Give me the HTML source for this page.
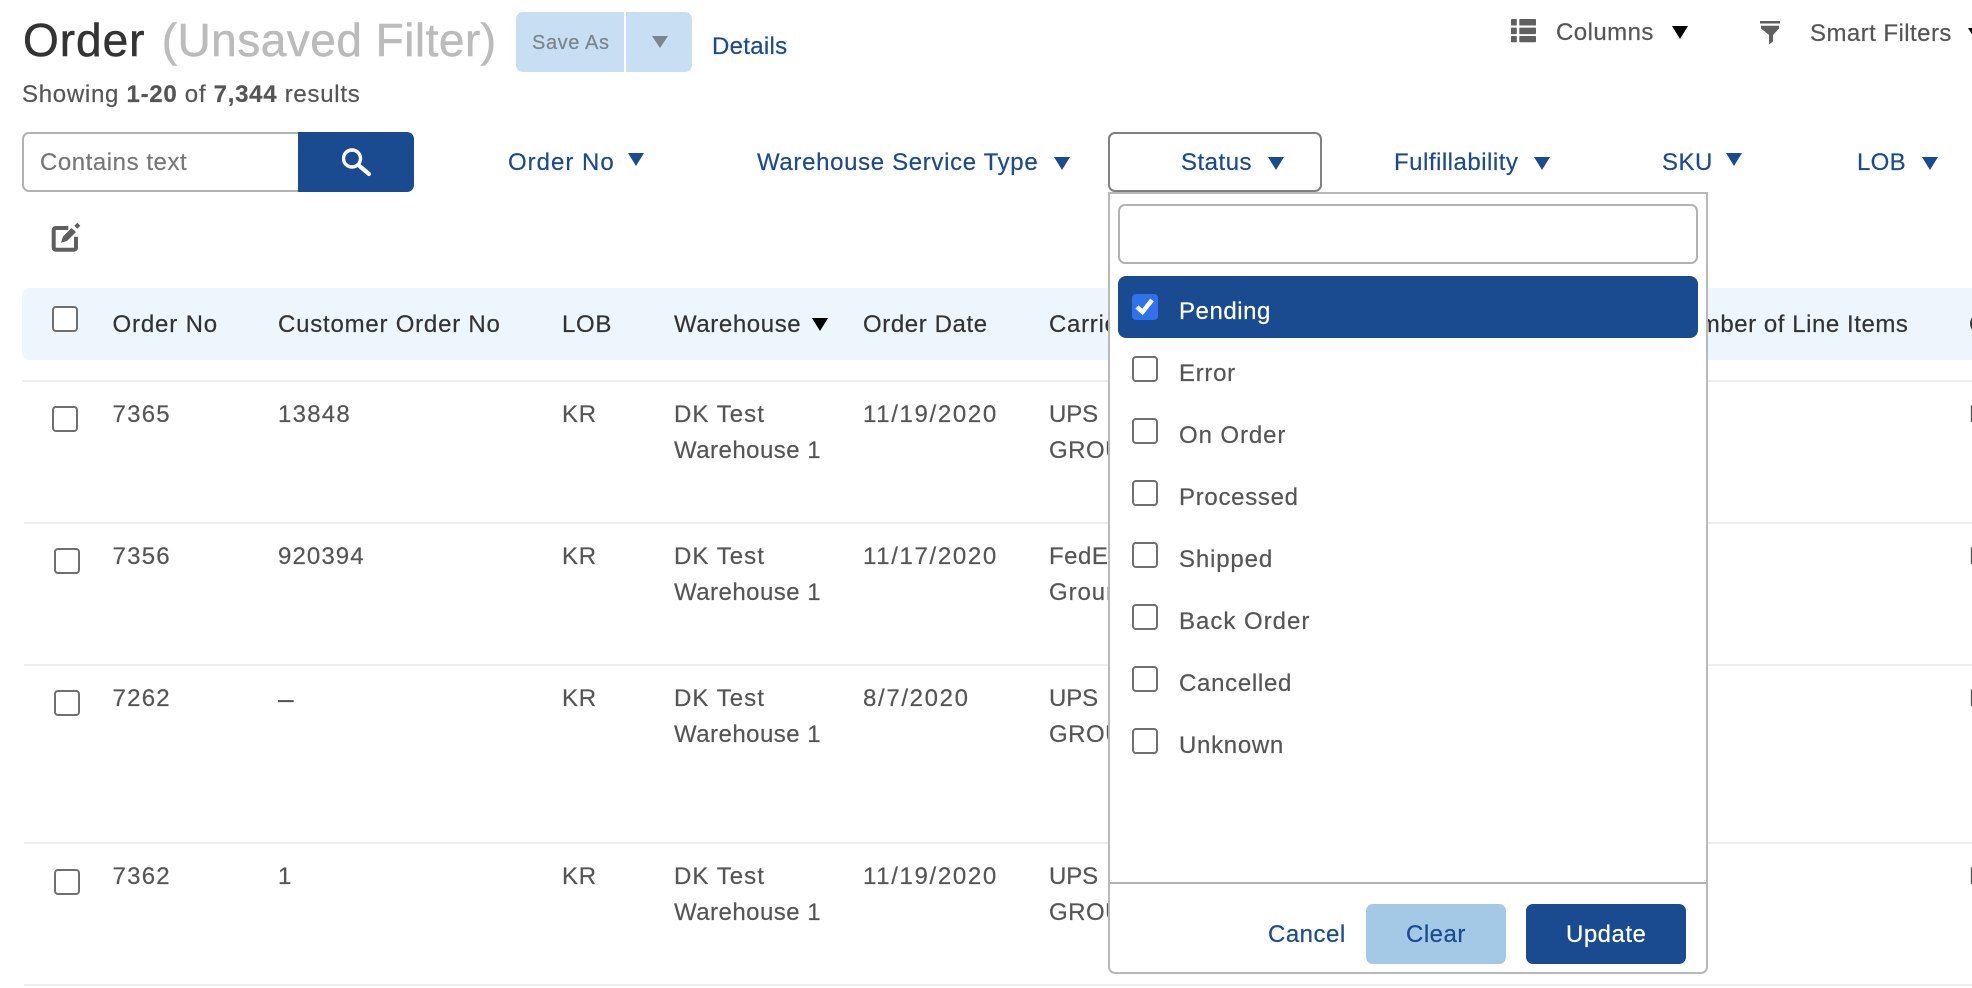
<!DOCTYPE html>
<html lang="en"><head><meta charset="utf-8"><title>Order</title>
<style>
html,body{margin:0;padding:0;background:#fff;width:1972px;height:988px;overflow:hidden}
body{position:relative;font-family:"Liberation Sans",Arial,sans-serif;font-size:24px;letter-spacing:.7px;color:#555;-webkit-text-stroke:.2px}
.t{position:absolute;line-height:36px;height:36px;white-space:nowrap;margin-top:1px}
.b{color:#1a4a8f}
.h{color:#333}
.n{letter-spacing:1.25px}
.d{letter-spacing:1.65px}
.w{letter-spacing:.47px}
.k{letter-spacing:1.05px}
.box{position:absolute;box-sizing:border-box}
.cb{position:absolute;box-sizing:border-box;width:26px;height:26px;border:2px solid #6f6f6f;border-radius:4px;background:#fff}
.tri{position:absolute;width:0;height:0;border-left:8px solid transparent;border-right:8px solid transparent;border-top:13px solid #1a4a8f}
.ln{position:absolute;height:2px;background:#eeeeee}
svg{position:absolute;display:block}
</style></head><body>

<div class="t" style="left:23px;top:15px;height:50px;line-height:50px;font-size:46px;letter-spacing:.97px;color:#333;margin-top:0;-webkit-text-stroke:.5px">Order <span style="color:#bbb;letter-spacing:.48px;margin-left:2.500px">(Unsaved Filter)</span></div>
<div class="box" style="left:516px;top:12px;width:176px;height:60px;background:#c7def3;border-radius:7px"></div>
<div class="box" style="left:624px;top:12px;width:2px;height:60px;background:#fff"></div>
<div class="t" style="left:532px;top:24px;font-size:20px;letter-spacing:.6px;color:#7b858d">Save As</div>
<div class="tri" style="left:652px;top:36px;border-top:12px solid #7b858d"></div>
<div class="t b" style="left:712px;top:28px;letter-spacing:.3px">Details</div>
<div class="t" style="left:22px;top:76px;letter-spacing:.72px">Showing <b>1-20</b> of <b>7,344</b> results</div>

<svg style="left:1511px;top:19px" width="25" height="24" viewBox="0 0 25 24"><g fill="#5f5f5f"><rect x="0" y="0" width="5.800" height="6.500" rx=".8"/><rect x="0" y="8.600" width="5.800" height="6.500" rx=".8"/><rect x="0" y="17" width="5.800" height="6.300" rx=".8"/><rect x="8.300" y="0" width="16.700" height="6.500" rx=".8"/><rect x="8.300" y="8.600" width="16.700" height="6.500" rx=".8"/><rect x="8.300" y="17" width="16.700" height="6.300" rx=".8"/></g></svg>
<div class="t" style="left:1556px;top:14px;letter-spacing:.45px">Columns</div>
<div class="tri" style="left:1672px;top:26px;border-top-color:#000"></div>
<svg style="left:1760px;top:21px" width="20" height="24" viewBox="0 0 20 24"><g fill="#5f5f5f"><rect x="0" y="0" width="20" height="2.500"/><path d="M1 4.700H19V7.500L13 14V20.500L9 23.500V14L1 7.500Z"/></g></svg>
<div class="t" style="left:1810px;top:15px;letter-spacing:.45px">Smart Filters</div>
<div class="tri" style="left:1968px;top:28px;border-top-color:#000;border-left-width:7px;border-right-width:7px;border-top-width:11px"></div>

<div class="box" style="left:22px;top:132px;width:277px;height:60px;border:2px solid #b2b2b2;border-right:0;border-radius:7px 0 0 7px"></div>
<div class="t" style="left:40px;top:144px;color:#777;letter-spacing:.55px">Contains text</div>
<div class="box" style="left:298px;top:132px;width:116px;height:60px;background:#1a4a8f;border-radius:0 7px 7px 0"></div>
<svg style="left:342px;top:147px" width="30" height="30" viewBox="0 0 30 30"><circle cx="10" cy="11.500" r="8.500" fill="none" stroke="#fff" stroke-width="3.400"/><path d="M17.500 19L27 27" stroke="#fff" stroke-width="4.200" stroke-linecap="round"/></svg>

<div class="t b" style="left:508px;top:144px;letter-spacing:1px">Order No</div><div class="tri" style="left:628px;top:153px"></div>
<div class="t b" style="left:757px;top:144px;letter-spacing:.66px">Warehouse Service Type</div><div class="tri" style="left:1054px;top:157px"></div>
<div class="box" style="left:1108px;top:132px;width:214px;height:60px;border:2px solid #808080;border-radius:7px"></div>
<div class="t b" style="left:1181px;top:144px;letter-spacing:.5px">Status</div><div class="tri" style="left:1268px;top:157px"></div>
<div class="t b" style="left:1394px;top:144px;letter-spacing:.5px">Fulfillability</div><div class="tri" style="left:1534px;top:157px"></div>
<div class="t b" style="left:1662px;top:144px;letter-spacing:.5px">SKU</div><div class="tri" style="left:1726px;top:153px"></div>
<div class="t b" style="left:1857px;top:144px;letter-spacing:.3px">LOB</div><div class="tri" style="left:1922px;top:157px"></div>

<svg style="left:50px;top:222px" width="31" height="31" viewBox="0 0 31 31"><path d="M18.300 6H6Q3.700 6 3.700 8.300V25.400Q3.700 27.700 6 27.700H23.700Q26 27.700 26 25.400V14.700" fill="none" stroke="#5f5f5f" stroke-width="4"/><path d="M11 20.700L13 14.500 21.500 6 26 10 17 19Z" fill="#5f5f5f"/><path d="M27.300 .7L30.300 3.700 27.300 6.700 24.300 3.700Z" fill="#5f5f5f"/></svg>

<div class="box" style="left:22px;top:288px;width:1950px;height:72px;background:#edf5fd;border-radius:8px 0 0 8px"></div>
<div class="cb" style="left:52px;top:306px"></div>
<div class="t h" style="left:112.500px;top:306px;letter-spacing:.85px">Order No</div>
<div class="t h" style="left:278px;top:306px;letter-spacing:.78px">Customer Order No</div>
<div class="t h" style="left:562px;top:306px">LOB</div>
<div class="t h" style="left:674px;top:306px;letter-spacing:.6px">Warehouse</div>
<div class="tri" style="left:812px;top:318px;border-top-color:#000"></div>
<div class="t h" style="left:863px;top:306px;letter-spacing:.6px">Order Date</div>
<div class="t h" style="left:1049px;top:306px">Carrier</div>
<div class="t h" style="left:1668px;top:306px;letter-spacing:.55px">Number of Line Items</div>
<div class="t h" style="left:1969px;top:306px">C</div>

<div class="ln" style="left:22px;top:380px;width:1950px"></div>
<div class="ln" style="left:24px;top:522px;width:1948px"></div>
<div class="ln" style="left:24px;top:664px;width:1948px"></div>
<div class="ln" style="left:24px;top:842px;width:1948px"></div>
<div class="ln" style="left:24px;top:984px;width:1948px"></div>

<div class="cb" style="left:52px;top:406px"></div>
<div class="t n" style="left:112.500px;top:396px">7365</div>
<div class="t n" style="left:278px;top:396px">13848</div>
<div class="t" style="left:562px;top:396px">KR</div>
<div class="t k" style="left:674px;top:396px">DK Test</div>
<div class="t w" style="left:674px;top:432px">Warehouse 1</div>
<div class="t d" style="left:863px;top:396px">11/19/2020</div>
<div class="t" style="left:1049px;top:396px;letter-spacing:-.1px">UPS</div>
<div class="t" style="left:1049px;top:432px;letter-spacing:.5px">GROUND</div>
<div class="t" style="left:1969px;top:396px">P</div>

<div class="cb" style="left:54px;top:548px"></div>
<div class="t n" style="left:112.500px;top:538px">7356</div>
<div class="t n" style="left:278px;top:538px;letter-spacing:1.1px">920394</div>
<div class="t" style="left:562px;top:538px">KR</div>
<div class="t k" style="left:674px;top:538px">DK Test</div>
<div class="t w" style="left:674px;top:574px">Warehouse 1</div>
<div class="t d" style="left:863px;top:538px">11/17/2020</div>
<div class="t" style="left:1049px;top:538px;letter-spacing:.5px">FedEx</div>
<div class="t" style="left:1049px;top:574px;letter-spacing:.9px">Ground</div>
<div class="t" style="left:1969px;top:538px">P</div>

<div class="cb" style="left:54px;top:690px"></div>
<div class="t n" style="left:112.500px;top:680px">7262</div>
<div class="t" style="left:278px;top:680px;letter-spacing:0;font-size:28px">–</div>
<div class="t" style="left:562px;top:680px">KR</div>
<div class="t k" style="left:674px;top:680px">DK Test</div>
<div class="t w" style="left:674px;top:716px">Warehouse 1</div>
<div class="t d" style="left:863px;top:680px">8/7/2020</div>
<div class="t" style="left:1049px;top:680px;letter-spacing:-.1px">UPS</div>
<div class="t" style="left:1049px;top:716px;letter-spacing:.5px">GROUND</div>
<div class="t" style="left:1969px;top:680px">P</div>

<div class="cb" style="left:54px;top:869px"></div>
<div class="t n" style="left:112.500px;top:858px">7362</div>
<div class="t" style="left:278px;top:858px">1</div>
<div class="t" style="left:562px;top:858px">KR</div>
<div class="t k" style="left:674px;top:858px">DK Test</div>
<div class="t w" style="left:674px;top:894px">Warehouse 1</div>
<div class="t d" style="left:863px;top:858px">11/19/2020</div>
<div class="t" style="left:1049px;top:858px;letter-spacing:-.1px">UPS</div>
<div class="t" style="left:1049px;top:894px;letter-spacing:.5px">GROUND</div>
<div class="t" style="left:1969px;top:858px">P</div>

<div class="box" style="left:1108px;top:192px;width:600px;height:782px;background:#fff;border:2px solid #b8b8b8;border-radius:0 0 7px 7px"></div>
<div class="box" style="left:1118px;top:204px;width:580px;height:60px;border:2px solid #b2b2b2;border-radius:7px"></div>
<div class="box" style="left:1118px;top:276px;width:580px;height:62px;background:#1a4a8f;border-radius:8px"></div>
<div class="box" style="left:1132px;top:294px;width:26px;height:26px;background:#2f72ec;border-radius:4px"></div>
<svg style="left:1132px;top:294px" width="26" height="26" viewBox="0 0 26 26"><path d="M5 13L10.500 18 20 6" fill="none" stroke="#fff" stroke-width="4.500"/></svg>
<div class="t" style="left:1179px;top:293px;color:#fff;letter-spacing:.55px">Pending</div>
<div class="cb" style="left:1132px;top:356px"></div><div class="t" style="left:1179px;top:355px">Error</div>
<div class="cb" style="left:1132px;top:418px"></div><div class="t" style="left:1179px;top:417px;letter-spacing:.9px">On Order</div>
<div class="cb" style="left:1132px;top:480px"></div><div class="t" style="left:1179px;top:479px">Processed</div>
<div class="cb" style="left:1132px;top:542px"></div><div class="t" style="left:1179px;top:541px;letter-spacing:.85px">Shipped</div>
<div class="cb" style="left:1132px;top:604px"></div><div class="t" style="left:1179px;top:603px;letter-spacing:1px">Back Order</div>
<div class="cb" style="left:1132px;top:666px"></div><div class="t" style="left:1179px;top:665px">Cancelled</div>
<div class="cb" style="left:1132px;top:728px"></div><div class="t" style="left:1179px;top:727px">Unknown</div>
<div class="box" style="left:1109px;top:882px;width:598px;height:2px;background:#b2b2b2"></div>
<div class="t b" style="left:1268px;top:916px;letter-spacing:.5px">Cancel</div>
<div class="box" style="left:1366px;top:904px;width:140px;height:60px;background:#a4c9e6;border-radius:7px"></div>
<div class="t b" style="left:1406px;top:916px;letter-spacing:.5px">Clear</div>
<div class="box" style="left:1526px;top:904px;width:160px;height:60px;background:#1a4a8f;border-radius:7px"></div>
<div class="t" style="left:1566px;top:916px;color:#fff;letter-spacing:.5px">Update</div>

</body></html>
